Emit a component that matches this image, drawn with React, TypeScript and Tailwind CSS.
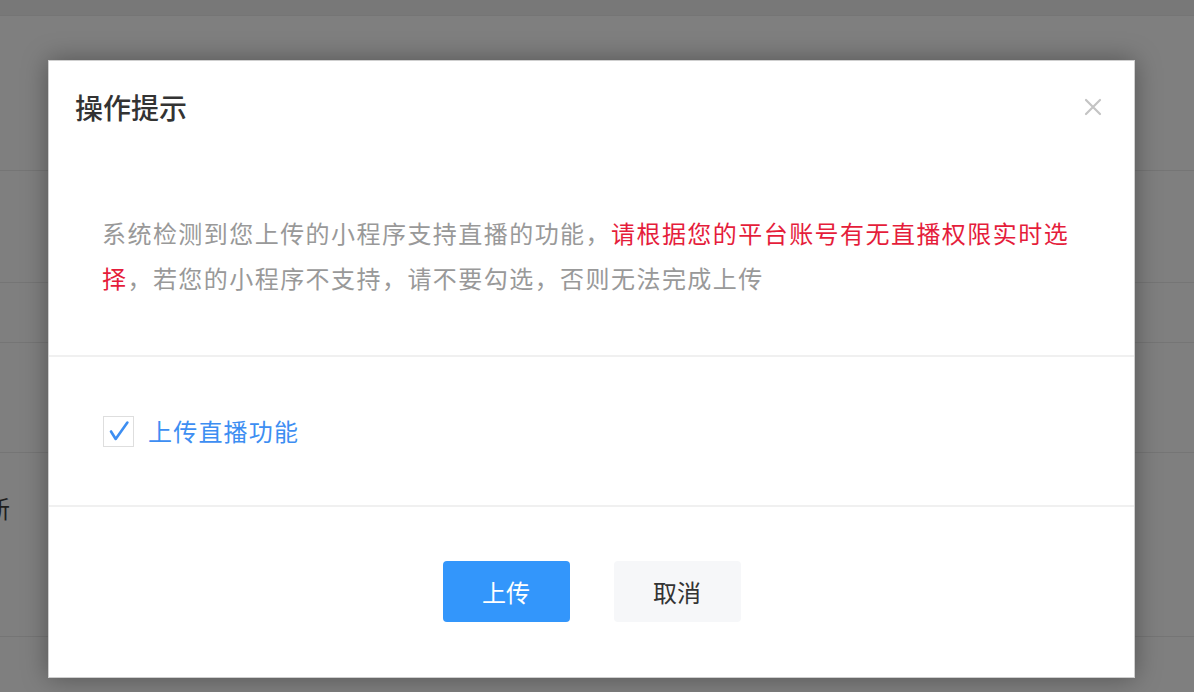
import React from 'react';

const font = { fontFamily: '"Noto Sans CJK SC", "Microsoft YaHei", sans-serif' };

function BackdropRows() {
  return (
    <div className="flex h-full w-full flex-col bg-[#7f7f7f]">
      <div className="h-[16px] border-b border-[#757575] bg-[#787878]" />
      <div className="h-[155px] border-b border-[#757575]" />
      <div className="h-[112px] border-b border-[#757575]" />
      <div className="h-[60px] border-b border-[#757575]" />
      <div className="h-[110px] border-b border-[#757575]" />
      <div className="h-[184px] border-b border-[#757575] pt-[39px]">
        <span className="-ml-[14px] block text-[24px] leading-[32px] text-[#1e1e1e]">新</span>
      </div>
      <div className="flex-1" />
    </div>
  );
}

function CloseIcon() {
  return (
    <svg width="18" height="18" viewBox="0 0 18 18" fill="none">
      <path d="M2 2L16 16M16 2L2 16" stroke="#c4c4c4" strokeWidth="2.2" strokeLinecap="round" />
    </svg>
  );
}

function CheckBox() {
  return (
    <div className="flex h-[31px] w-[31px] items-center justify-center border border-[#dedede] bg-white">
      <svg width="31" height="31" viewBox="0 0 31 31" fill="none">
        <path
          d="M7.5 15.5L12.5 23.5L25 6"
          stroke="#3d8ef2"
          strokeWidth="2.8"
          strokeLinecap="round"
          strokeLinejoin="round"
        />
      </svg>
    </div>
  );
}

export default function App() {
  return (
    <div className="relative h-[692px] w-full overflow-hidden" style={font}>
      <BackdropRows />

      <div className="absolute left-[48px] top-[60px] flex h-[618px] w-[1087px] flex-col border border-[#cfcfcf] bg-white shadow-[0_0_24px_rgba(0,0,0,0.35)]">
        <div className="relative px-[26px] pt-[26px]">
          <h2 className="text-[28px] font-medium leading-[40px] text-[#333]">操作提示</h2>
          <button className="absolute right-[32px] top-[37px]">
            <CloseIcon />
          </button>
        </div>

        <div className="px-[53px] pb-[55px] pt-[83px]">
          <p className="text-[24px] leading-[45px] tracking-[1.45px] text-[#999]">
            系统检测到您上传的小程序支持直播的功能，
            <span className="text-[#e51d3b]">请根据您的平台账号有无直播权限实时选择</span>
            ，若您的小程序不支持，请不要勾选，否则无法完成上传
          </p>
        </div>

        <div className="h-[2px] bg-[#f0f0f0]" />

        <div className="flex h-[148px] items-center px-[54px]">
          <CheckBox />
          <span className="ml-[14px] text-[24px] tracking-[1.2px] text-[#3d8ef2]">上传直播功能</span>
        </div>

        <div className="h-[2px] bg-[#f0f0f0]" />

        <div className="flex flex-1 items-start justify-center gap-[44px] pt-[54px]">
          <button className="h-[61px] w-[127px] rounded-[4px] bg-[#3396fb] text-[24px] text-white">上传</button>
          <button className="h-[61px] w-[127px] rounded-[4px] bg-[#f6f7f9] text-[24px] text-[#333]">取消</button>
        </div>
      </div>
    </div>
  );
}
